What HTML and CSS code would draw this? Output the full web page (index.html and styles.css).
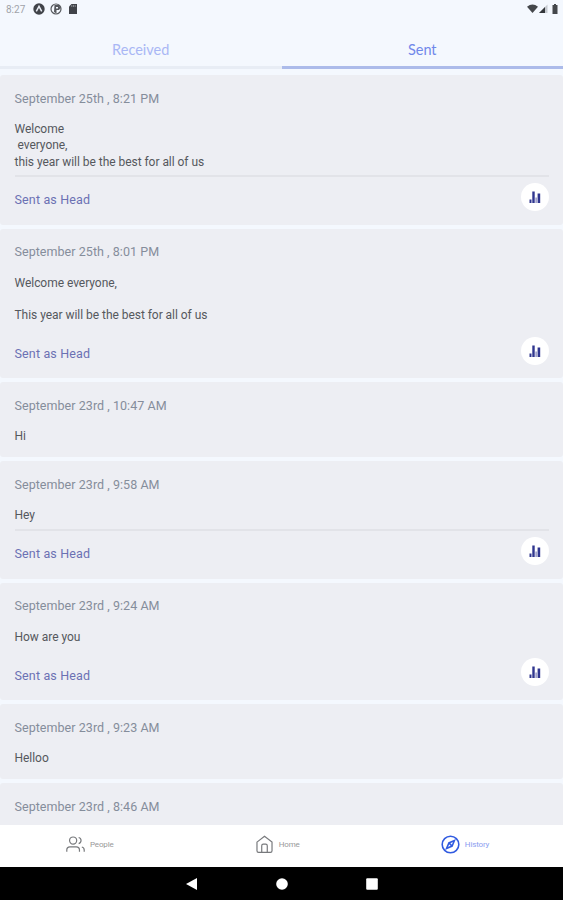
FILE: index.html
```html
<!DOCTYPE html>
<html lang="en">
<head>
<meta charset="utf-8">
<title>History</title>
<link rel="stylesheet" href="styles.css">
</head>
<body>
<svg class="defs" width="0" height="0" aria-hidden="true">
  <symbol id="bars" viewBox="0 0 12 14"><path d="M0.500 9.500h2V13h-2zM3.300 1.500h2.400V13H3.300zM8.600 3.500h2.600V13H8.600z"/><path opacity=".45" d="M6.300 7.500h1.700V13H6.300z"/></symbol>
</svg>
<header class="status">
  <span class="clock">8:27</span>
  <svg class="s-icon" viewBox="0 0 12 12"><circle cx="6" cy="6" r="5.700" fill="#404349"/><path d="M3.300 8.300 6 3.300l2.700 5" fill="none" stroke="#e9edf4" stroke-width="1.500"/></svg>
  <svg class="s-icon" viewBox="0 0 12 12"><circle cx="6" cy="6" r="5" fill="#f4f8fe" stroke="#55585d" stroke-width="1.200"/><path d="M4.500 2h4.500l1.500 3-1.500 2H6.500v3.500L4 9z" fill="#55585d"/><path d="M6 4h2v1.500H6z" fill="#f4f8fe"/></svg>
  <svg class="s-icon" viewBox="0 0 12 12"><path d="M4.500 1H10v10H2V3.500z" fill="#404349"/><path d="M4.800 2v2M6.500 2v2M8.200 2v2" stroke="#a5a8ad" stroke-width=".7"/></svg>
  <svg class="signals" viewBox="0 0 32 12"><path d="M0 3.700Q5.500-.5 11 3.700L5.500 10z" fill="#44474b"/><path d="M20.500 1.500V10H12z" fill="#c5c9cf"/><path d="M18 4v6h-6z" fill="#33363a"/><path d="M25.500 2H27V1h2v1h1.500v9h-5z" fill="#44474b"/></svg>
</header>
<nav class="tabs">
  <div class="tab">Received</div>
  <div class="tab active">Sent</div>
</nav>
<main class="list">
  <article class="card">
    <div class="date">September 25th , 8:21 PM</div>
    <div class="msg">Welcome
 everyone,
this year will be the best for all of us</div>
    <div class="foot line"><span>Sent as Head</span><span class="stat"><svg><use href="#bars"/></svg></span></div>
  </article>
  <article class="card">
    <div class="date">September 25th , 8:01 PM</div>
    <div class="msg">Welcome everyone,

This year will be the best for all of us</div>
    <div class="foot"><span>Sent as Head</span><span class="stat"><svg><use href="#bars"/></svg></span></div>
  </article>
  <article class="card">
    <div class="date">September 23rd , 10:47 AM</div>
    <div class="msg">Hi</div>
  </article>
  <article class="card">
    <div class="date">September 23rd , 9:58 AM</div>
    <div class="msg">Hey</div>
    <div class="foot line"><span>Sent as Head</span><span class="stat"><svg><use href="#bars"/></svg></span></div>
  </article>
  <article class="card">
    <div class="date">September 23rd , 9:24 AM</div>
    <div class="msg">How are you</div>
    <div class="foot"><span>Sent as Head</span><span class="stat"><svg><use href="#bars"/></svg></span></div>
  </article>
  <article class="card">
    <div class="date">September 23rd , 9:23 AM</div>
    <div class="msg">Helloo</div>
  </article>
  <article class="card">
    <div class="date">September 23rd , 8:46 AM</div>
  </article>
</main>
<nav class="bottom">
  <div class="item people"><svg viewBox="0 0 24 24"><path d="M17 21v-2a4 4 0 0 0-4-4H5a4 4 0 0 0-4 4v2"/><circle cx="9" cy="7" r="4.500"/><path d="M23 21v-2a4 4 0 0 0-3-3.870M16 3.130a4 4 0 0 1 0 7.750"/></svg><span>People</span></div>
  <div class="item home"><svg viewBox="0 0 24 24"><path d="M2.500 9 12 1.500 21.500 9v11a2 2 0 0 1-2 2h-15a2 2 0 0 1-2-2z"/><path d="M8.500 22v-8.500a2 2 0 0 1 2-2h3a2 2 0 0 1 2 2V22"/></svg><span>Home</span></div>
  <div class="item history"><svg viewBox="0 0 24 24"><circle cx="12" cy="12" r="10.500"/><path d="m17 7-3 7-7 3 3-7z"/><path d="m10 10 4 4"/></svg><span>History</span></div>
</nav>
<footer class="system">
  <svg viewBox="0 0 14 14"><path d="M1 7 12 1v12z"/></svg>
  <svg viewBox="0 0 14 14"><circle cx="7" cy="7" r="5.800"/></svg>
  <svg viewBox="0 0 14 14"><rect x="1.200" y="1.200" width="11.600" height="11.600" rx="1"/></svg>
</footer>
</body>
</html>
```
FILE: styles.css
```css
* { box-sizing: border-box; }
body {
  margin: 0;
  height: 900px;
  overflow: hidden;
  display: flex;
  flex-direction: column;
  background: #f4f8fe;
  font-family: Roboto, sans-serif;
}
.defs { display: none; }
.status {
  height: 18px;
  display: flex;
  align-items: center;
  gap: 5px;
  padding: 0 4px 0 6px;
}
.clock { width: 22px; font-size: 10px; color: #a0a3a9; }
.s-icon { width: 12px; height: 12px; }
.signals { width: 32px; height: 12px; margin-left: auto; }
.tabs { display: flex; height: 51px; }
.tab {
  flex: 1;
  display: flex;
  align-items: center;
  justify-content: center;
  padding-top: 15px;
  border-bottom: 3px solid #e8edf5;
  font-family: Lato, sans-serif;
  font-size: 14.500px;
  color: #a9b7f5;
}
.tab.active { color: #7088ea; border-bottom-color: #acbbea; }
.list {
  flex: 1;
  overflow: hidden;
  min-height: 0;
  display: flex;
  flex-direction: column;
  gap: 4px;
  padding-top: 6.400px;
}
.card {
  flex: none;
  padding: 14.500px 14px 12.950px 14.500px;
  background: #edeef3;
  border-radius: 3px;
}
.card:last-child { height: 60px; }
.date { height: 18px; margin-bottom: 13.500px; font-size: 12.500px; line-height: 18px; letter-spacing: .05px; color: #858d9b; }
.msg { white-space: pre; font-size: 12px; line-height: 16.100px; letter-spacing: -.04px; color: #55585d; }
.foot {
  height: 38.200px;
  margin: 5.800px 0 -1.700px;
  border-top: 2px solid transparent;
  display: flex;
  justify-content: space-between;
  font-size: 12.500px;
  line-height: 46px;
  letter-spacing: .15px;
  color: #6b71b3;
}
.foot.line { border-color: #e2e3e8; }
.stat {
  width: 28px;
  height: 28px;
  margin-top: 5.800px;
  border-radius: 50%;
  background: #fff;
  display: grid;
  place-items: center;
}
.stat svg { width: 12px; height: 14px; fill: #30368f; }
.bottom { height: 42px; display: grid; grid-template-columns: repeat(3, 1fr); background: #fff; }
.item { display: flex; align-items: center; gap: 5px; padding-bottom: 4px; font-size: 8px; letter-spacing: -.15px; color: #999; }
.item svg { width: 19px; height: 19px; fill: none; stroke: #77797c; stroke-width: 1.500; }
.people { padding-left: 66px; }
.home { padding-left: 67px; }
.history { padding-left: 65.500px; color: #8b9df0; }
.history svg { stroke: #315be0; stroke-width: 2; }
.system { height: 33px; background: #000; display: flex; align-items: center; justify-content: center; gap: 76px; }
.system svg { width: 14px; height: 14px; fill: #fff; }
```
